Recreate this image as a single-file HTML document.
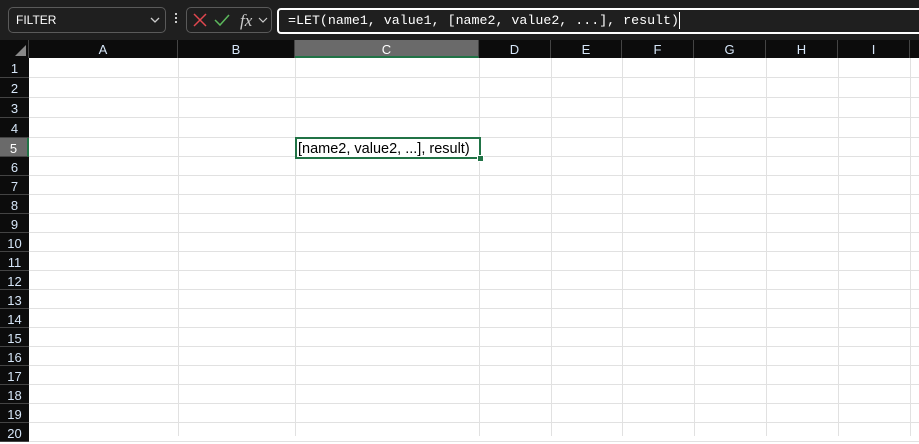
<!DOCTYPE html><html><head><style>
body{margin:0;width:919px;height:436px;overflow:hidden;background:#fff;font-family:"Liberation Sans",sans-serif;position:relative}
.top{position:absolute;left:0;top:0;width:919px;height:40px;background:#1f1f1f}
.nb{position:absolute;left:8px;top:7px;width:156px;height:24px;border:1px solid #5a5a5a;border-radius:5px;color:#fff;font-size:12px;line-height:24px;box-sizing:content-box}
.fxb{position:absolute;left:186px;top:7px;width:84px;height:24px;border:1px solid #5a5a5a;border-radius:5px}
.fb{position:absolute;left:277px;top:8px;width:660px;height:22px;border:2px solid #fff;border-radius:4px;background:#1f1f1f;color:#fff;font-family:"Liberation Mono",monospace;font-size:13.3px;line-height:22px;padding-left:9px}
.hdr{position:absolute;top:40px;height:18px;background:#0c0c0c;color:#d6e6f8;font-size:13px;text-align:center;line-height:19px;border-right:1px solid #444;box-sizing:border-box}
.rh{position:absolute;left:0;width:29px;background:#0c0c0c;color:#d6e6f8;font-size:13px;text-align:center;border-bottom:1px solid #444;box-sizing:border-box}
.vl{position:absolute;top:58px;bottom:0;width:1px;background:#e1e1e1}
.hl{position:absolute;left:29px;right:0;height:1px;background:#e1e1e1}
</style></head><body>
<div class="top">
<div class="nb"><span style="padding-left:7px">FILTER</span><svg style="position:absolute;right:5px;top:8px" width="10" height="8"><path d="M1 2l4 4 4-4" stroke="#ccc" fill="none" stroke-width="1.3"/></svg></div>
<div style="position:absolute;left:175px;top:13px;width:2px;height:2px;background:#ccc;box-shadow:0 4px #ccc,0 8px #ccc"></div>
<div class="fxb"><svg width="84" height="24"><path d="M7 6l12 12M19 6L7 18" stroke="#e0474f" stroke-width="1.5" fill="none"/><path d="M28 12l5 5 9-10" stroke="#5cb85c" stroke-width="1.5" fill="none"/><text x="53" y="18" fill="#ccc" font-family="Liberation Serif" font-style="italic" font-size="17">fx</text><path d="M72 10l4 4 4-4" stroke="#ccc" fill="none" stroke-width="1.2"/></svg></div>
<div class="fb">=LET(name1, value1, [name2, value2, ...], result)<span style="display:inline-block;width:1px;height:17px;background:#fff;vertical-align:middle"></span></div>
</div>
<div class="hdr" style="left:0;width:29px"><svg width="29" height="18"><path d="M26 5v11H15z" fill="#888"/></svg></div>
<div class="hdr" style="left:29px;width:149px">A</div>
<div class="hdr" style="left:178px;width:117px">B</div>
<div class="hdr" style="left:295px;width:184px;background:#6a6a6a;border-bottom:2px solid #217346;color:#fff">C</div>
<div class="hdr" style="left:479px;width:72px">D</div>
<div class="hdr" style="left:551px;width:71px">E</div>
<div class="hdr" style="left:622px;width:72px">F</div>
<div class="hdr" style="left:694px;width:72px">G</div>
<div class="hdr" style="left:766px;width:72px">H</div>
<div class="hdr" style="left:838px;width:72px">I</div>
<div class="hdr" style="left:910px;width:20px"></div>
<div class="vl" style="left:178px"></div><div class="vl" style="left:295px"></div><div class="vl" style="left:479px"></div><div class="vl" style="left:551px"></div><div class="vl" style="left:622px"></div><div class="vl" style="left:694px"></div><div class="vl" style="left:766px"></div><div class="vl" style="left:838px"></div><div class="vl" style="left:910px"></div>
<div id="rows"></div>
<script>
var h='';var t=58;for(var i=0;i<20;i++){var ht=i<4?20:19;var sel=i==4;
h+='<div class="rh" style="top:'+t+'px;height:'+ht+'px;line-height:'+(ht+2)+'px;'+(sel?'background:#6a6a6a;color:#fff;border-right:2px solid #217346;':'')+'">'+(i+1)+'</div>';
h+='<div class="hl" style="top:'+(t+ht-1)+'px"></div>';t+=ht;}
document.getElementById('rows').innerHTML=h;
</script>
<div style="position:absolute;left:295px;top:137px;width:181px;height:18px;border:2px solid #217346;background:#fff;font-size:14.5px;line-height:20px;color:#000;padding-left:1px;box-sizing:content-box;white-space:nowrap;overflow:hidden">[name2, value2, ...], result)</div>
<div style="position:absolute;left:477px;top:155px;width:5px;height:5px;background:#217346;border:1px solid #fff"></div>
</body></html>
